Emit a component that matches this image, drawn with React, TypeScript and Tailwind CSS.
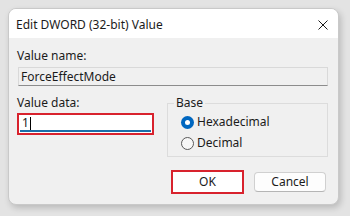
export default function App() {
  const font = { fontFamily: '"Noto Sans", "Open Sans", sans-serif' }
  return (
    <div
      className="w-[350px] h-[216px] bg-[#e3e3e3] pt-[8px] pl-[8px] text-[12px] text-[#1b1b1b]"
      style={font}
    >
      <div className="w-[331px] h-[197px] flex flex-col rounded-[8px] border border-[#c9c9c9] bg-[#f0f0f0] overflow-hidden shadow-[2px_3px_6px_rgba(0,0,0,0.18)]">
        {/* title bar */}
        <div className="h-[29px] shrink-0 bg-white flex items-center justify-between pl-[7px] pr-[10px] pt-[2px]">
          <span className="leading-none">Edit DWORD (32-bit) Value</span>
          <svg width="10" height="10" viewBox="0 0 10 10">
            <path d="M0.5 0.5 L9.5 9.5 M9.5 0.5 L0.5 9.5" stroke="#1b1b1b" strokeWidth="1" />
          </svg>
        </div>

        {/* body */}
        <div className="flex flex-col pl-[8px] pr-[10px] pt-[10px]">
          <div className="leading-[16px]">Value name:</div>
          <div className="mt-[3px] h-[19px] w-[310px] ml-[1px] border border-[#d9d9d9] border-b-[#8c8c8c] bg-[#f0f0f0] flex items-center pl-[2px] leading-none">
            ForceEffectMode
          </div>

          <div className="flex mt-[9px]">
            <div className="flex flex-col w-[137px]">
              <div className="leading-[16px]">Value data:</div>
              <div className="mt-[2px] h-[22px] border-2 border-[#d8222d] bg-white p-[1px]">
                <div className="h-full border-b-2 border-[#1b6ea8] flex items-center pl-[2px] leading-none">
                  1<span className="inline-block w-px h-[13px] bg-black ml-[1px]" />
                </div>
              </div>
            </div>

            <fieldset className="ml-[13px] w-[161px] h-[62px] border border-[#dcdcdc] pl-[13px] pr-[6px]">
              <legend className="-ml-[7px] px-[2px] leading-[16px]">Base</legend>
              <div className="flex items-center gap-[3px] mt-[3px]">
                <span className="w-[13px] h-[13px] rounded-full bg-[#0067c0] flex items-center justify-center">
                  <span className="w-[5px] h-[5px] rounded-full bg-white" />
                </span>
                <span className="leading-[16px]">Hexadecimal</span>
              </div>
              <div className="flex items-center gap-[3px] mt-[5px]">
                <span className="w-[13px] h-[13px] rounded-full border border-[#5a5a5a] bg-[#f7f7f7]" />
                <span className="leading-[16px]">Decimal</span>
              </div>
            </fieldset>
          </div>

          <div className="flex justify-end items-center gap-[10px] mt-[13px] pr-[2px]">
            <div className="w-[73px] h-[24px] border-2 border-[#d8222d] bg-white p-[1px]">
              <div className="h-full flex items-center justify-center leading-none">OK</div>
            </div>
            <div className="w-[72px] h-[20px] rounded-[4px] border border-[#d0d0d0] border-b-[#b5b5b5] bg-[#fdfdfd] flex items-center justify-center leading-none">
              Cancel
            </div>
          </div>
        </div>
      </div>
    </div>
  )
}
